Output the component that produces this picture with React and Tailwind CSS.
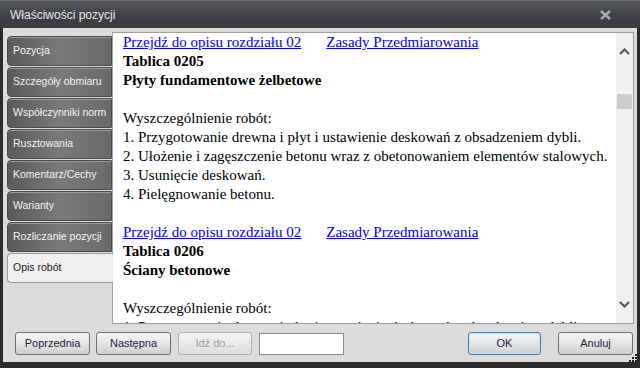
import React from 'react';

const tabs = [
  'Pozycja',
  'Szczegóły obmiaru',
  'Współczynniki norm',
  'Rusztowania',
  'Komentarz/Cechy',
  'Warianty',
  'Rozliczanie pozycji',
  'Opis robót',
];

const ui = { fontFamily: '"Liberation Sans", Arial, sans-serif' };
const serif = { fontFamily: '"Liberation Serif", "Times New Roman", serif' };

function Section({ table, title }) {
  return (
    <div>
      <div className="flex gap-[25px]">
        <span className="text-[#0000ee] underline">Przejdź do opisu rozdziału 02</span>
        <span className="text-[#0000ee] underline">Zasady Przedmiarowania</span>
      </div>
      <div className="font-bold">Tablica {table}</div>
      <div className="font-bold">{title}</div>
      <div className="h-[19px]" />
      <div>Wyszczególnienie robót:</div>
    </div>
  );
}

function Button({ children, disabled, primary, className = '' }) {
  const look = disabled
    ? 'border-[#b5b5b5] bg-gradient-to-b from-[#f4f4f4] to-[#dedede] text-[#a0a0a0]'
    : primary
    ? 'border-[#3c7fb1] bg-gradient-to-b from-[#f6f6f6] via-[#e4e4e4] to-[#cfcfcf] text-[#1e1e3c] shadow-[inset_0_0_0_1px_#c4e5f6]'
    : 'border-[#707070] bg-gradient-to-b from-[#f6f6f6] via-[#e4e4e4] to-[#cfcfcf] text-[#1e1e3c]';
  return (
    <div className={`h-[23px] flex items-center justify-center rounded-[3px] border text-[11px] ${look} ${className}`}>
      {children}
    </div>
  );
}

export default function App() {
  return (
    <div className="w-[640px] h-[368px] flex flex-col bg-[#2a2b2d] overflow-hidden" style={ui}>
      {/* Title bar */}
      <div className="h-[28px] flex items-center justify-between pl-[10px] pr-[29px] bg-gradient-to-b from-[#55585d] via-[#404246] to-[#393b3f] border-t border-[#6a6d72]">
        <span className="text-[12px] text-[#e6e6e6]">Właściwości pozycji</span>
        <svg width="11" height="10" viewBox="0 0 11 10">
          <path d="M1 1 L10 9 M10 1 L1 9" stroke="#a3abb4" strokeWidth="2.4" />
        </svg>
      </div>

      {/* Body */}
      <div className="flex-1 mx-[3px] mb-[6px] bg-[#dcdcdc] flex flex-col relative">
        <div className="flex pt-[4px] pl-[4px] pr-[3px]">
          {/* Tabs */}
          <div className="w-[105px] pt-[4px] flex flex-col gap-[1px] shrink-0">
            {tabs.map((t) =>
              t === 'Opis robót' ? (
                <div
                  key={t}
                  className="h-[30px] flex items-center pl-[5px] rounded-l-[4px] border border-r-0 border-[#9a9a9a] bg-[#efefef] text-[10.5px] text-[#1a1a1a] -mr-[1px] relative z-10"
                >
                  {t}
                </div>
              ) : (
                <div
                  key={t}
                  className="h-[30px] flex items-center pl-[5px] rounded-l-[4px] border border-[#4a4a4a] bg-gradient-to-r from-[#5a5a5a] via-[#7a7a7a] to-[#6a6a6a] text-[10.5px] text-[#f2f2f2] whitespace-nowrap overflow-hidden shadow-[inset_0_1px_0_#9a9a9a]"
                >
                  {t}
                </div>
              )
            )}
          </div>

          {/* Content */}
          <div className="flex-1 h-[292px] bg-white border border-[#a0a0a0] flex overflow-hidden">
            <div className="flex-1 pl-[10px] text-[15px] leading-[19px] text-black overflow-hidden whitespace-nowrap" style={serif}>
              <Section table="0205" title="Płyty fundamentowe żelbetowe" />
              <div>1. Przygotowanie drewna i płyt i ustawienie deskowań z obsadzeniem dybli.</div>
              <div>2. Ułożenie i zagęszczenie betonu wraz z obetonowaniem elementów stalowych.</div>
              <div>3. Usunięcie deskowań.</div>
              <div>4. Pielęgnowanie betonu.</div>
              <div className="h-[19px]" />
              <Section table="0206" title="Ściany betonowe" />
              <div>1. Przygotowanie drewna i płyt i ustawienie deskowań z obsadzeniem dybli.</div>
            </div>
            {/* Scrollbar */}
            <div className="w-[17px] shrink-0 bg-[#f0f0f0] flex flex-col items-center">
              <div className="h-[28px] flex items-center justify-center pt-[8px]">
                <svg width="11" height="7" viewBox="0 0 11 7">
                  <path d="M1 6 L5.5 1.5 L10 6" stroke="#5a5a5a" strokeWidth="2.2" fill="none" />
                </svg>
              </div>
              <div className="mt-[33px] w-[15px] h-[15px] bg-[#cdcdcd]" />
              <div className="flex-1" />
              <div className="h-[28px] flex items-center justify-center pb-[10px]">
                <svg width="11" height="7" viewBox="0 0 11 7">
                  <path d="M1 1 L5.5 5.5 L10 1" stroke="#5a5a5a" strokeWidth="2.2" fill="none" />
                </svg>
              </div>
            </div>
          </div>
        </div>

        {/* Bottom buttons */}
        <div className="flex items-center pl-[12px] pr-[4px] mt-[8px]">
          <Button className="w-[75px]">Poprzednia</Button>
          <Button className="w-[75px] ml-[6px]">Następna</Button>
          <Button disabled className="w-[74px] ml-[7px]">Idź do...</Button>
          <div className="w-[85px] h-[22px] ml-[7px] bg-white border border-[#8a8a8a]" />
          <div className="flex-1" />
          <Button primary className="w-[73px]">OK</Button>
          <Button className="w-[75px] ml-[17px]">Anuluj</Button>
        </div>

        {/* Resize grip */}
        <svg className="absolute right-0 bottom-0" width="8" height="8" viewBox="0 0 8 8">
          <rect x="6" y="0" width="2" height="2" fill="#222" />
          <rect x="3" y="3" width="2" height="2" fill="#222" />
          <rect x="6" y="3" width="2" height="2" fill="#222" />
          <rect x="0" y="6" width="2" height="2" fill="#222" />
          <rect x="3" y="6" width="2" height="2" fill="#222" />
          <rect x="6" y="6" width="2" height="2" fill="#222" />
        </svg>
      </div>
    </div>
  );
}
